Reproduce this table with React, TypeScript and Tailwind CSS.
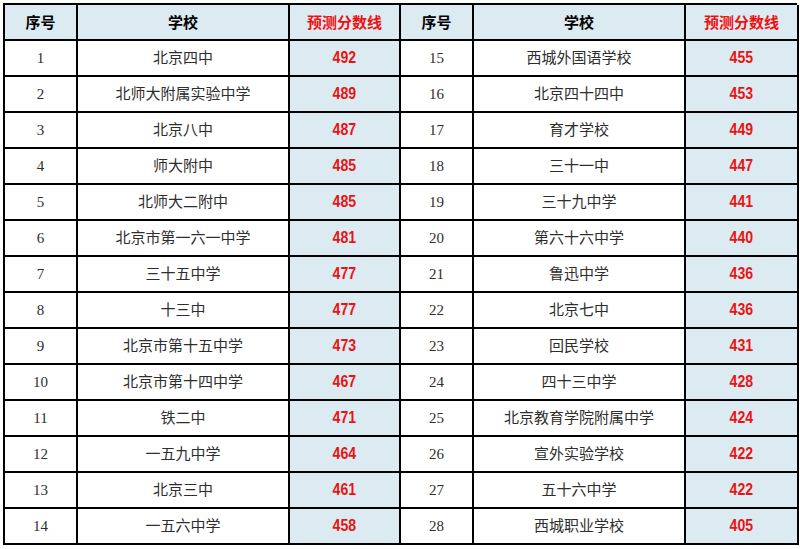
import React from "react";

const left: [string, string, string][] = [
  ["1", "北京四中", "492"],
  ["2", "北师大附属实验中学", "489"],
  ["3", "北京八中", "487"],
  ["4", "师大附中", "485"],
  ["5", "北师大二附中", "485"],
  ["6", "北京市第一六一中学", "481"],
  ["7", "三十五中学", "477"],
  ["8", "十三中", "477"],
  ["9", "北京市第十五中学", "473"],
  ["10", "北京市第十四中学", "467"],
  ["11", "铁二中", "471"],
  ["12", "一五九中学", "464"],
  ["13", "北京三中", "461"],
  ["14", "一五六中学", "458"],
];
const right: [string, string, string][] = [
  ["15", "西城外国语学校", "455"],
  ["16", "北京四十四中", "453"],
  ["17", "育才学校", "449"],
  ["18", "三十一中", "447"],
  ["19", "三十九中学", "441"],
  ["20", "第六十六中学", "440"],
  ["21", "鲁迅中学", "436"],
  ["22", "北京七中", "436"],
  ["23", "回民学校", "431"],
  ["24", "四十三中学", "428"],
  ["25", "北京教育学院附属中学", "424"],
  ["26", "宣外实验学校", "422"],
  ["27", "五十六中学", "422"],
  ["28", "西城职业学校", "405"],
];

const cell = "h-[36px] border-r-2 border-b-2 border-black flex items-center justify-center";
const headCls = `${cell} bg-[#dcebf1] text-[15px] font-bold font-['Noto_Sans_CJK_SC',sans-serif]`;
const bodyCls = `${cell} text-[15px] text-[#2e2e2e] font-['Liberation_Serif','Noto_Sans_CJK_SC',serif]`;
const scoreCls = `${cell} bg-[#dcebf1] text-[16px] font-bold text-[#e81414] font-['Liberation_Sans',sans-serif]`;

export default function App() {
  return (
    <div className="w-[800px] h-[549px] bg-white pl-[3px] pt-[3px]">
      <div className="grid grid-cols-[73px_212px_111px_73px_212px_113px] w-[794px] border-l-2 border-t-2 border-black">
        {[0, 1].map((k) => (
          <React.Fragment key={k}>
            <div className={`${headCls} text-black`}>序号</div>
            <div className={`${headCls} text-black`}>学校</div>
            <div className={`${headCls} text-[#ee1111]`}>预测分数线</div>
          </React.Fragment>
        ))}
        {left.map((l, i) => {
          const r = right[i];
          return (
            <React.Fragment key={i}>
              {[l, r].map((row, j) => (
                <React.Fragment key={j}>
                  <div className={bodyCls}>{row[0]}</div>
                  <div className={bodyCls}>{row[1]}</div>
                  <div className={scoreCls}>
                    <span className="inline-block scale-x-[0.88]">{row[2]}</span>
                  </div>
                </React.Fragment>
              ))}
            </React.Fragment>
          );
        })}
      </div>
    </div>
  );
}
